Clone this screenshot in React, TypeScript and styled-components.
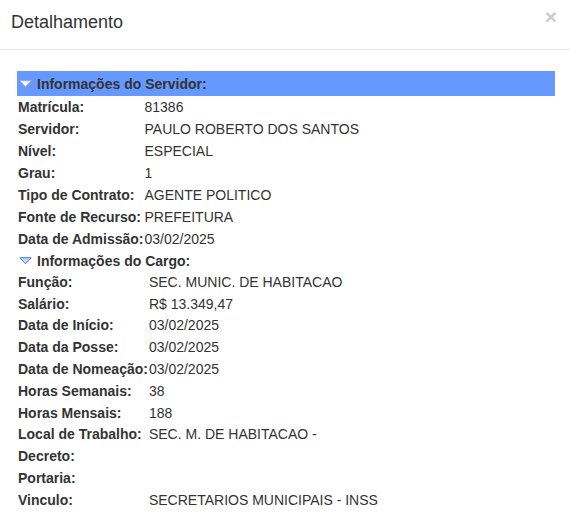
import React from "react";
import styled, { createGlobalStyle } from "styled-components";

const Global = createGlobalStyle`
  html, body { margin: 0; padding: 0; background: #fff; }
  body { font-family: "Liberation Sans", Arial, sans-serif; color: #333; font-size: 14px; }
`;

const Modal = styled.div`
  width: 570px;
  background: #fff;
`;

const Header = styled.div`
  display: flex;
  align-items: center;
  justify-content: space-between;
  height: 49px;
  padding: 0 13px 0 11px;
  border-bottom: 1px solid #e5e5e5;
  box-sizing: content-box;
`;

const Title = styled.h4`
  margin: 0;
  margin-top: -6px;
  font-size: 18px;
  font-weight: normal;
  color: #333;
  line-height: 20px;
`;

const Close = styled.button`
  border: 0;
  background: none;
  padding: 0;
  margin-top: -16px;
  font-family: "Liberation Sans", Arial, sans-serif;
  font-size: 21px;
  font-weight: bold;
  line-height: 1;
  color: #000;
  opacity: 0.2;
  cursor: pointer;
`;

const Body = styled.div`
  padding: 21px 15px 10px 17px;
`;

const SectionHeader = styled.div<{ $filled?: boolean; $h: number }>`
  display: flex;
  align-items: center;
  gap: 5px;
  height: ${(p) => p.$h}px;
  padding-left: 2px;
  background: ${(p) => (p.$filled ? "#6699ff" : "transparent")};
  font-weight: bold;
  color: #333;
`;

const Grid = styled.div<{ $row: number }>`
  display: grid;
  grid-template-columns: max-content 1fr;
  column-gap: 1px;
  grid-auto-rows: ${(p) => p.$row}px;
  padding-left: 1px;
  align-items: center;
`;

const Label = styled.div`
  font-weight: bold;
  color: #333;
  white-space: nowrap;
`;

const Value = styled.div`
  color: #333;
  white-space: nowrap;
`;

const Triangle = ({ light }: { light?: boolean }) => (
  <svg width="13" height="8" viewBox="0 0 13 8">
    <polygon
      points="0.8,0.8 12.2,0.8 6.5,6.8"
      fill={light ? "#f7f8fc" : "#c6dcf6"}
      stroke={light ? "#a4b0cc" : "#3a78d0"}
      strokeWidth="1"
      strokeLinejoin="round"
    />
  </svg>
);

const servidor: [string, string][] = [
  ["Matrícula:", "81386"],
  ["Servidor:", "PAULO ROBERTO DOS SANTOS"],
  ["Nível:", "ESPECIAL"],
  ["Grau:", "1"],
  ["Tipo de Contrato:", "AGENTE POLITICO"],
  ["Fonte de Recurso:", "PREFEITURA"],
  ["Data de Admissão:", "03/02/2025"],
];

const cargo: [string, string][] = [
  ["Função:", "SEC. MUNIC. DE HABITACAO"],
  ["Salário:", "R$ 13.349,47"],
  ["Data de Início:", "03/02/2025"],
  ["Data da Posse:", "03/02/2025"],
  ["Data de Nomeação:", "03/02/2025"],
  ["Horas Semanais:", "38"],
  ["Horas Mensais:", "188"],
  ["Local de Trabalho:", "SEC. M. DE HABITACAO -"],
  ["Decreto:", ""],
  ["Portaria:", ""],
  ["Vinculo:", "SECRETARIOS MUNICIPAIS - INSS"],
];

export default function App() {
  return (
    <>
      <Global />
      <Modal>
        <Header>
          <Title>Detalhamento</Title>
          <Close aria-label="Fechar">×</Close>
        </Header>
        <Body>
          <SectionHeader $filled $h={25}>
            <Triangle light />
            Informações do Servidor:
          </SectionHeader>
          <Grid $row={22}>
            {servidor.map(([l, v]) => (
              <React.Fragment key={l}>
                <Label>{l}</Label>
                <Value>{v}</Value>
              </React.Fragment>
            ))}
          </Grid>
          <SectionHeader $h={21}>
            <Triangle />
            Informações do Cargo:
          </SectionHeader>
          <Grid $row={21.8}>
            {cargo.map(([l, v]) => (
              <React.Fragment key={l}>
                <Label>{l}</Label>
                <Value>{v}</Value>
              </React.Fragment>
            ))}
          </Grid>
        </Body>
      </Modal>
    </>
  );
}
